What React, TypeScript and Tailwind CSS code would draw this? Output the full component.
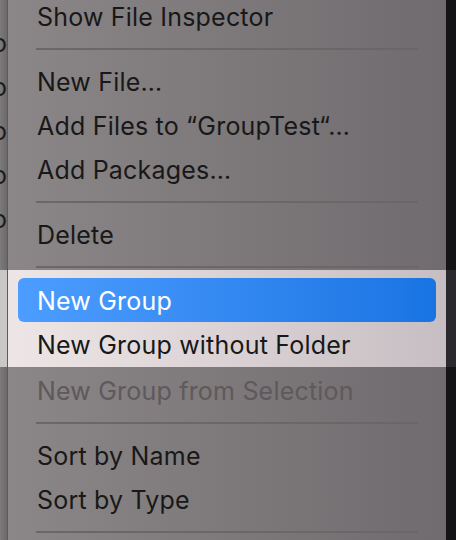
import React from "react";

type Entry =
  | { kind: "item"; label: string; selected?: boolean; disabled?: boolean }
  | { kind: "sep" };

const top: Entry[] = [
  { kind: "item", label: "Show File Inspector" },
  { kind: "sep" },
  { kind: "item", label: "New File…" },
  { kind: "item", label: "Add Files to “GroupTest“…" },
  { kind: "item", label: "Add Packages…" },
  { kind: "sep" },
  { kind: "item", label: "Delete" },
  { kind: "sep" },
];

const band: Entry[] = [
  { kind: "item", label: "New Group", selected: true },
  { kind: "item", label: "New Group without Folder" },
];

const bottom: Entry[] = [
  { kind: "item", label: "New Group from Selection", disabled: true },
  { kind: "sep" },
  { kind: "item", label: "Sort by Name" },
  { kind: "item", label: "Sort by Type" },
  { kind: "sep" },
];

function Row({ entry }: { entry: Entry }) {
  if (entry.kind === "sep") {
    return (
      <div className="h-[21px] flex items-center px-[28px] shrink-0">
        <div className="h-[2px] w-full bg-[#6b6668]" />
      </div>
    );
  }
  if (entry.selected) {
    return (
      <div className="h-[44px] mx-[10px] flex items-center pt-[4px] px-[19px] rounded-[6px] bg-gradient-to-r from-[#4c9dff] to-[#1874e3] text-white shrink-0">
        {entry.label}
      </div>
    );
  }
  return (
    <div
      className={`h-[44px] flex items-center pt-[4px] px-[29px] shrink-0 whitespace-nowrap ${
        entry.disabled ? "text-[#5e595b]" : "text-[#181818]"
      }`}
    >
      {entry.label}
    </div>
  );
}

function LeftStrip({ light, glyphs }: { light?: boolean; glyphs?: boolean }) {
  return (
    <div
      className={`w-[8px] shrink-0 overflow-hidden border-r border-[#5d5a5b] ${
        light ? "bg-[#cbc7c7]" : "bg-gradient-to-r from-[#7d7a7b] to-[#6c696a]"
      }`}
    >
      {glyphs && (
        <div className="flex flex-col pt-[28px] -ml-[8px] text-[#1c1c1c] leading-[30px]">
          {["o", "ol", "o", "ol", "ol"].map((g, i) => (
            <span key={i} className="h-[44px] tracking-[-1px]">
              {g}
            </span>
          ))}
        </div>
      )}
    </div>
  );
}

function RightStrip({ light }: { light?: boolean }) {
  return <div className={`w-[10px] shrink-0 ${light ? "bg-[#2a292d]" : "bg-[#141416]"}`} />;
}

export default function App() {
  return (
    <div
      className="w-[456px] h-[540px] overflow-hidden flex flex-col text-[25px] tracking-[0.2px]"
      style={{ fontFamily: "Inter, 'Liberation Sans', sans-serif" }}
    >
      {/* upper part of the menu */}
      <div className="h-[270px] flex shrink-0">
        <LeftStrip glyphs />
        <div className="flex-1 overflow-hidden bg-gradient-to-r from-[#8b8687] to-[#706b6e]">
          <div className="flex flex-col -mt-[6px]">
            {top.map((e, i) => (
              <Row key={i} entry={e} />
            ))}
          </div>
        </div>
        <RightStrip />
      </div>

      {/* spotlight band */}
      <div className="h-[97px] flex shrink-0">
        <LeftStrip light />
        <div className="flex-1 flex flex-col pt-[8px] bg-gradient-to-r from-[#eee6e6] to-[#c6bec2]">
          {band.map((e, i) => (
            <Row key={i} entry={e} />
          ))}
        </div>
        <RightStrip light />
      </div>

      {/* lower part */}
      <div className="flex-1 flex">
        <LeftStrip />
        <div className="flex-1 overflow-hidden flex flex-col pt-[1px] bg-gradient-to-r from-[#8b8687] to-[#706b6e]">
          {bottom.map((e, i) => (
            <Row key={i} entry={e} />
          ))}
        </div>
        <RightStrip />
      </div>
    </div>
  );
}
